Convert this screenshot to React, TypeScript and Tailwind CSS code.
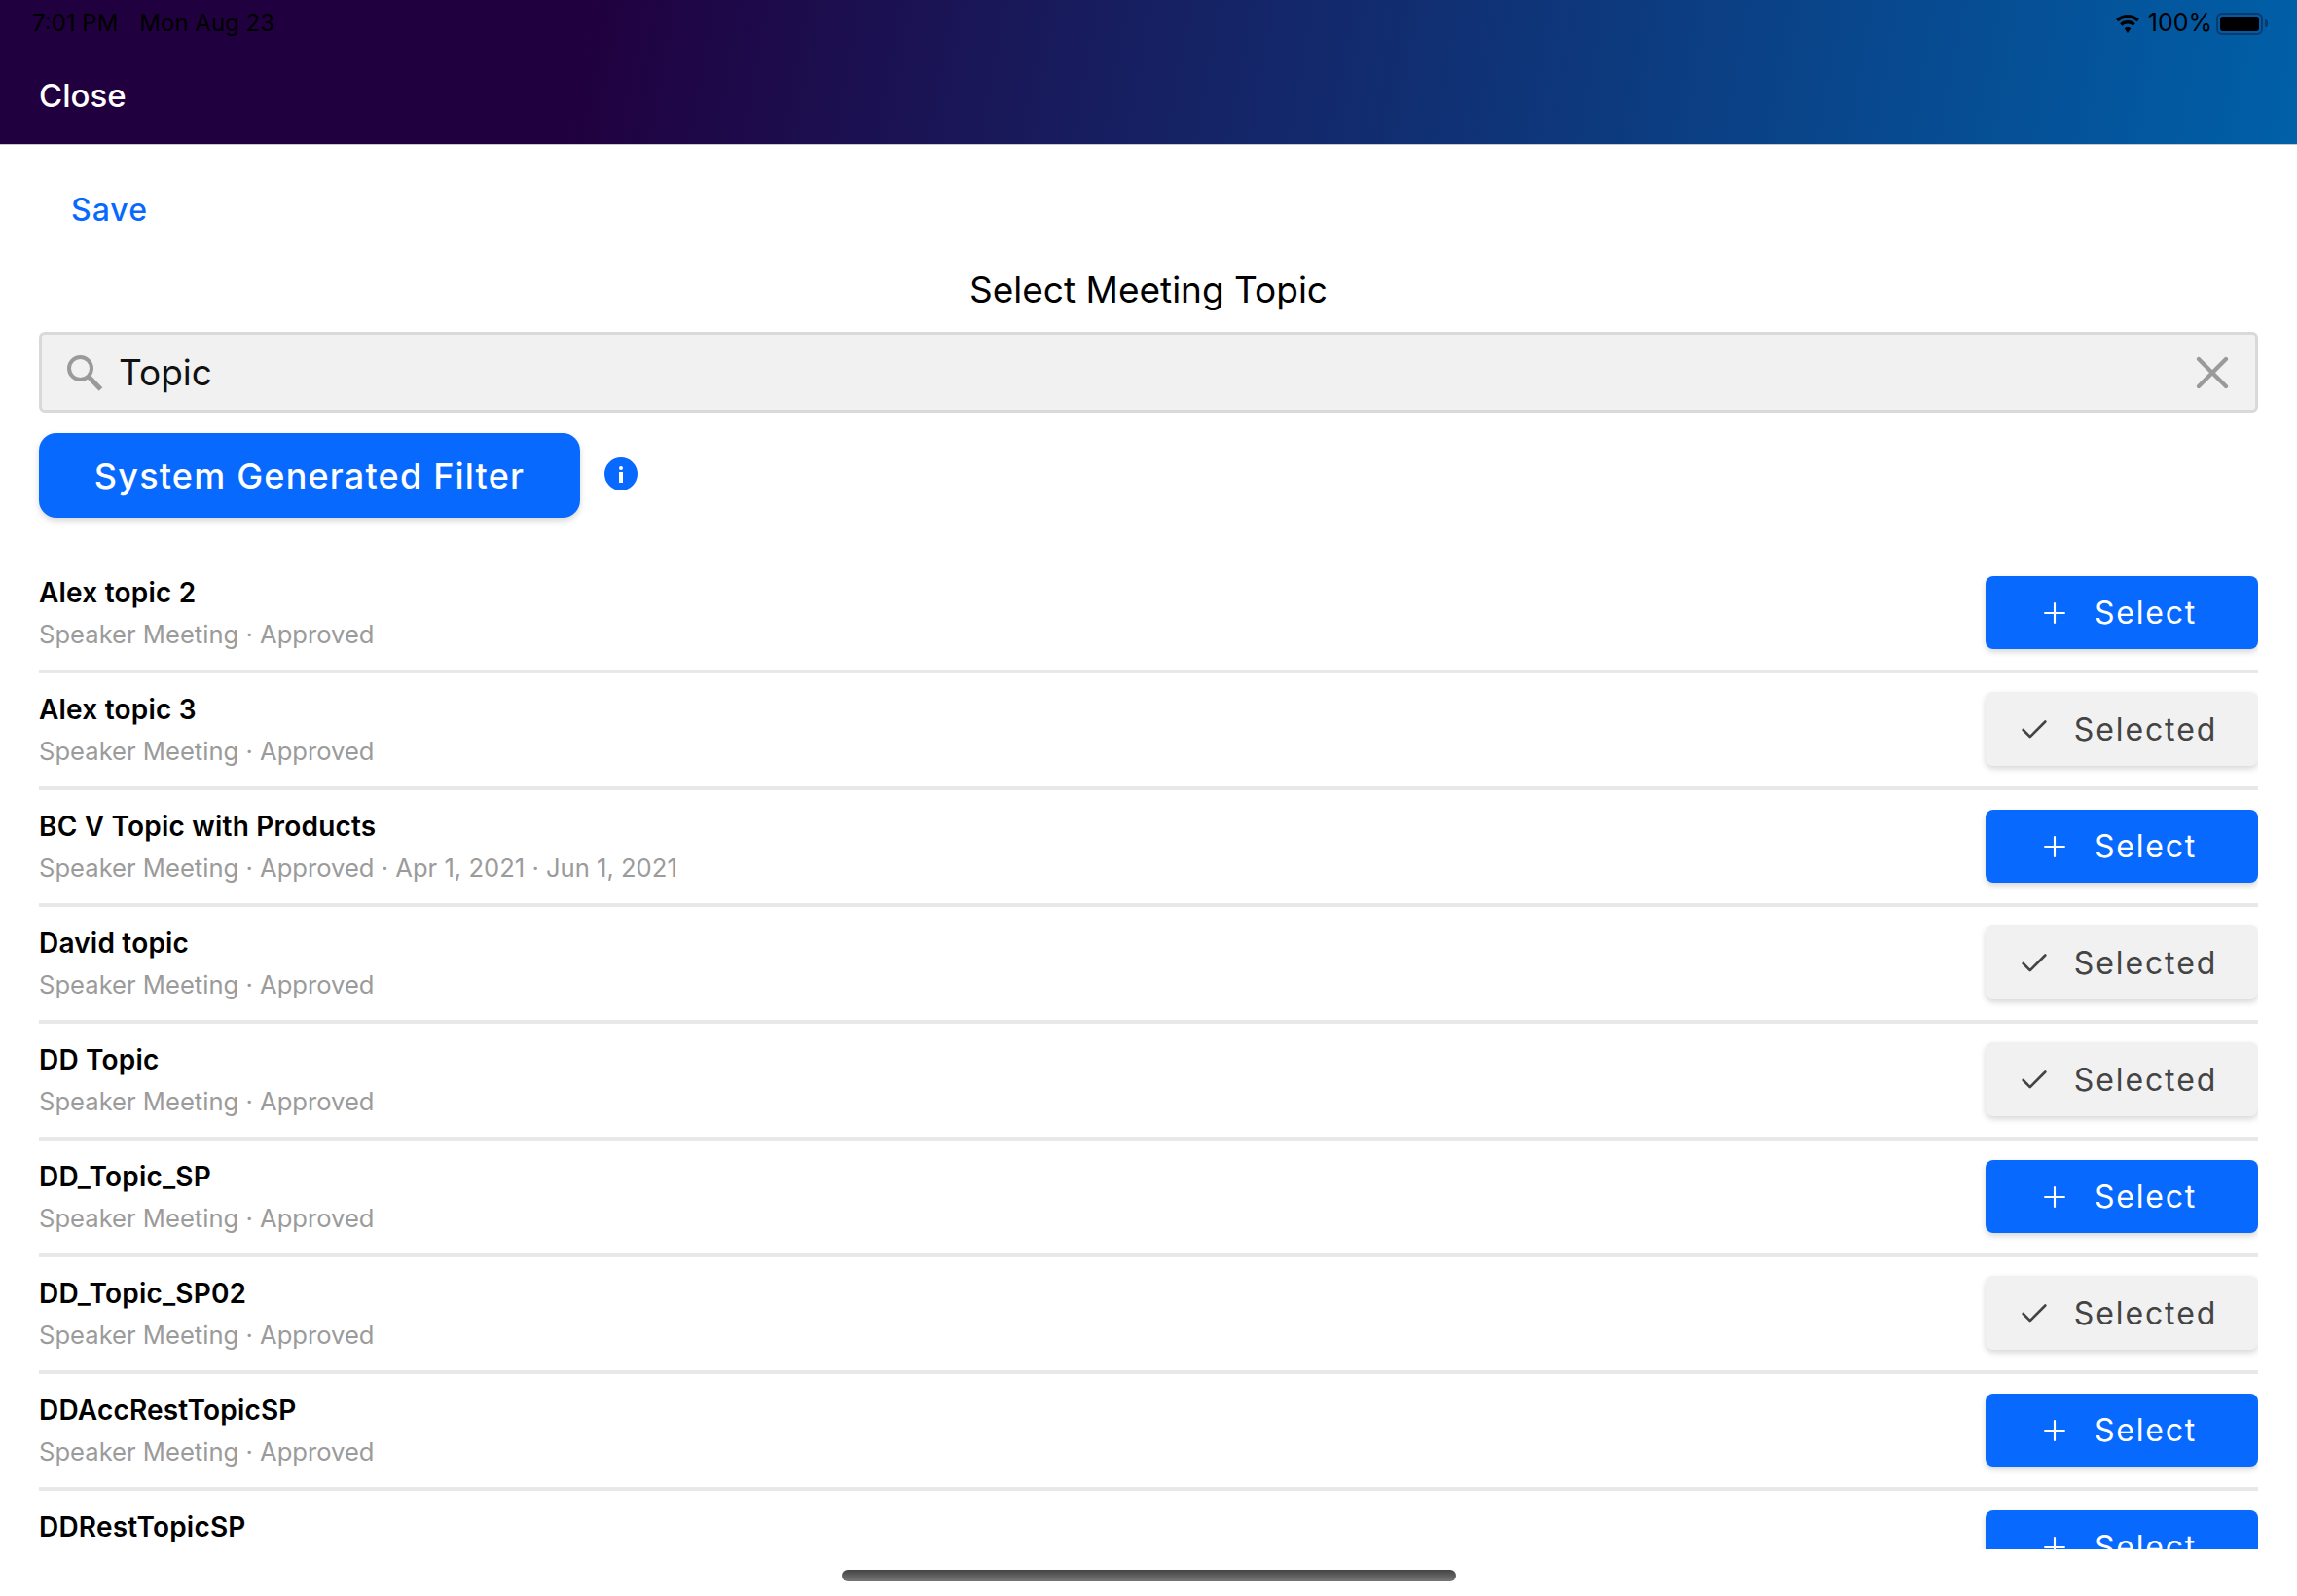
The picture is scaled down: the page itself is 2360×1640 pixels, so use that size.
import React from "react";
import { Check, Plus, X } from "lucide-react";

const rows: [string, string, boolean][] = [
  ["Alex topic 2", "Speaker Meeting · Approved", false],
  ["Alex topic 3", "Speaker Meeting · Approved", true],
  ["BC V Topic with Products", "Speaker Meeting · Approved · Apr 1, 2021 · Jun 1, 2021", false],
  ["David topic", "Speaker Meeting · Approved", true],
  ["DD Topic", "Speaker Meeting · Approved", true],
  ["DD_Topic_SP", "Speaker Meeting · Approved", false],
  ["DD_Topic_SP02", "Speaker Meeting · Approved", true],
  ["DDAccRestTopicSP", "Speaker Meeting · Approved", false],
  ["DDRestTopicSP", "Speaker Meeting · Approved", false],
];

function Row({ title, sub, selected }: { title: string; sub: string; selected: boolean }) {
  return (
    <div className="flex items-start justify-between h-[120px] pt-5 border-b-4 border-[#e8e8e8] shrink-0">
      <div className="flex flex-col">
        <div className="text-[28px] leading-[34px] font-semibold tracking-[0.2px] text-black">{title}</div>
        <div className="text-[25.6px] leading-[34px] text-[#9b9b9b] mt-[9px]">{sub}</div>
      </div>
      {selected ? (
        <div className="flex items-center justify-center w-[280px] h-[76px] -mt-[1px] pt-[2px] pr-[9px] rounded-lg bg-[#f1f1f1] shadow-[0_3px_6px_rgba(0,0,0,0.16)] text-[#444444]">
          <Check size={34} strokeWidth={1.9} className="mr-[24px]" />
          <span className="text-[32px] tracking-[1.9px]">Selected</span>
        </div>
      ) : (
        <div className="flex items-center justify-center w-[280px] h-[75px] pt-[1px] pr-[9px] rounded-lg bg-[#0869ff] shadow-[0_3px_6px_rgba(0,0,0,0.16)] text-white">
          <Plus size={34} strokeWidth={1.5} className="mr-[24px]" />
          <span className="text-[32px] tracking-[1.8px]">Select</span>
        </div>
      )}
    </div>
  );
}

export default function App() {
  return (
    <div className="w-[2360px] h-[1640px] bg-white flex flex-col overflow-hidden font-['Inter',sans-serif]">
      <header className="h-[149px] shrink-0 flex flex-col border-b border-[#c8c8c8] bg-[linear-gradient(100deg,#21003f_25%,#0060a8_100%)]">
        <div className="h-[48px] flex items-center justify-between pl-[33px] pr-[30px] text-[24px] text-black">
          <div className="flex gap-[22px]">
            <span>7:01 PM</span>
            <span>Mon Aug 23</span>
          </div>
          <div className="flex items-center">
            <svg width="28" height="21" viewBox="0 0 28 21" className="mr-[7px]">
              <path d="M14 4.500c3.700 0 7 1.400 9.600 3.800l2.300-2.500C22.700 2.800 18.600 1 14 1S5.300 2.800 2.100 5.800l2.300 2.500C7 5.900 10.300 4.500 14 4.500z" fill="#000" />
              <path d="M14 10.500c2.100 0 4 .8 5.500 2.200l2.300-2.500C19.700 8.200 17 7 14 7s-5.700 1.200-7.800 3.200l2.300 2.500c1.500-1.400 3.400-2.200 5.500-2.200z" fill="#000" />
              <path d="M14 14c-1.200 0-2.400.5-3.300 1.300L14 20l3.300-4.700C16.400 14.500 15.200 14 14 14z" fill="#000" />
            </svg>
            <span className="text-[25px]">100%</span>
            <div className="ml-[4px] w-[48px] h-[23px] rounded-[6px] border-2 border-[#0a3a6e] p-[2px]">
              <div className="w-full h-full rounded-[3px] bg-black" />
            </div>
            <div className="ml-[2px] w-[3px] h-[8px] rounded-r-full bg-[#0a3a6e]" />
          </div>
        </div>
        <div className="pl-[40px] text-[33px] leading-[40px] font-medium text-white mt-[30px]">Close</div>
      </header>

      <main className="px-[40px] flex flex-col">
        <div className="pl-[33px] mt-[47px] text-[32px] leading-[40px] font-medium tracking-[1px] text-[#0869ff]">Save</div>
        <h1 className="mt-[38px] text-center text-[37px] leading-[48px] font-normal text-black">Select Meeting Topic</h1>
        <div className="mt-[19px] h-[83px] flex items-center border-[3px] border-[#d9d9d9] rounded-md bg-[#f1f1f1] pl-[25px] pr-[16px] shrink-0">
          <svg width="38" height="38" viewBox="0 0 38 38" fill="none" stroke="#9a9a9a" strokeWidth="4">
            <circle cx="14.500" cy="14.500" r="11.500" />
            <path d="M23 23l12.500 13" strokeWidth="5" />
          </svg>
          <span className="ml-[16px] text-[37px] text-[#111]">Topic</span>
          <X size={56} strokeWidth={1.8} className="ml-auto text-[#9a9a9a]" />
        </div>
        <div className="mt-[21px] flex items-center shrink-0">
          <div className="w-[556px] h-[87px] rounded-[18px] bg-[#0869ff] shadow-[0_3px_6px_rgba(0,0,0,0.16)] flex items-center justify-center text-white text-[36px] font-medium tracking-[1.2px]">
            System Generated Filter
          </div>
          <div className="ml-[25px] -mt-[3px] w-[34px] h-[34px] rounded-full bg-[#0869ff] flex flex-col items-center justify-center gap-[2px]">
            <span className="w-[4px] h-[4px] rounded-full bg-white" />
            <span className="w-[4px] h-[11px] bg-white" />
          </div>
        </div>
        <div className="mt-[40px] h-[1020px] overflow-hidden flex flex-col">
          {rows.map((r) => (
            <Row key={r[0]} title={r[0]} sub={r[1]} selected={r[2]} />
          ))}
        </div>
      </main>
      <div className="mt-[21px] ml-[865px] w-[631px] h-[12px] shrink-0 rounded-full bg-[linear-gradient(180deg,#444444,#777777)]" />
    </div>
  );
}
